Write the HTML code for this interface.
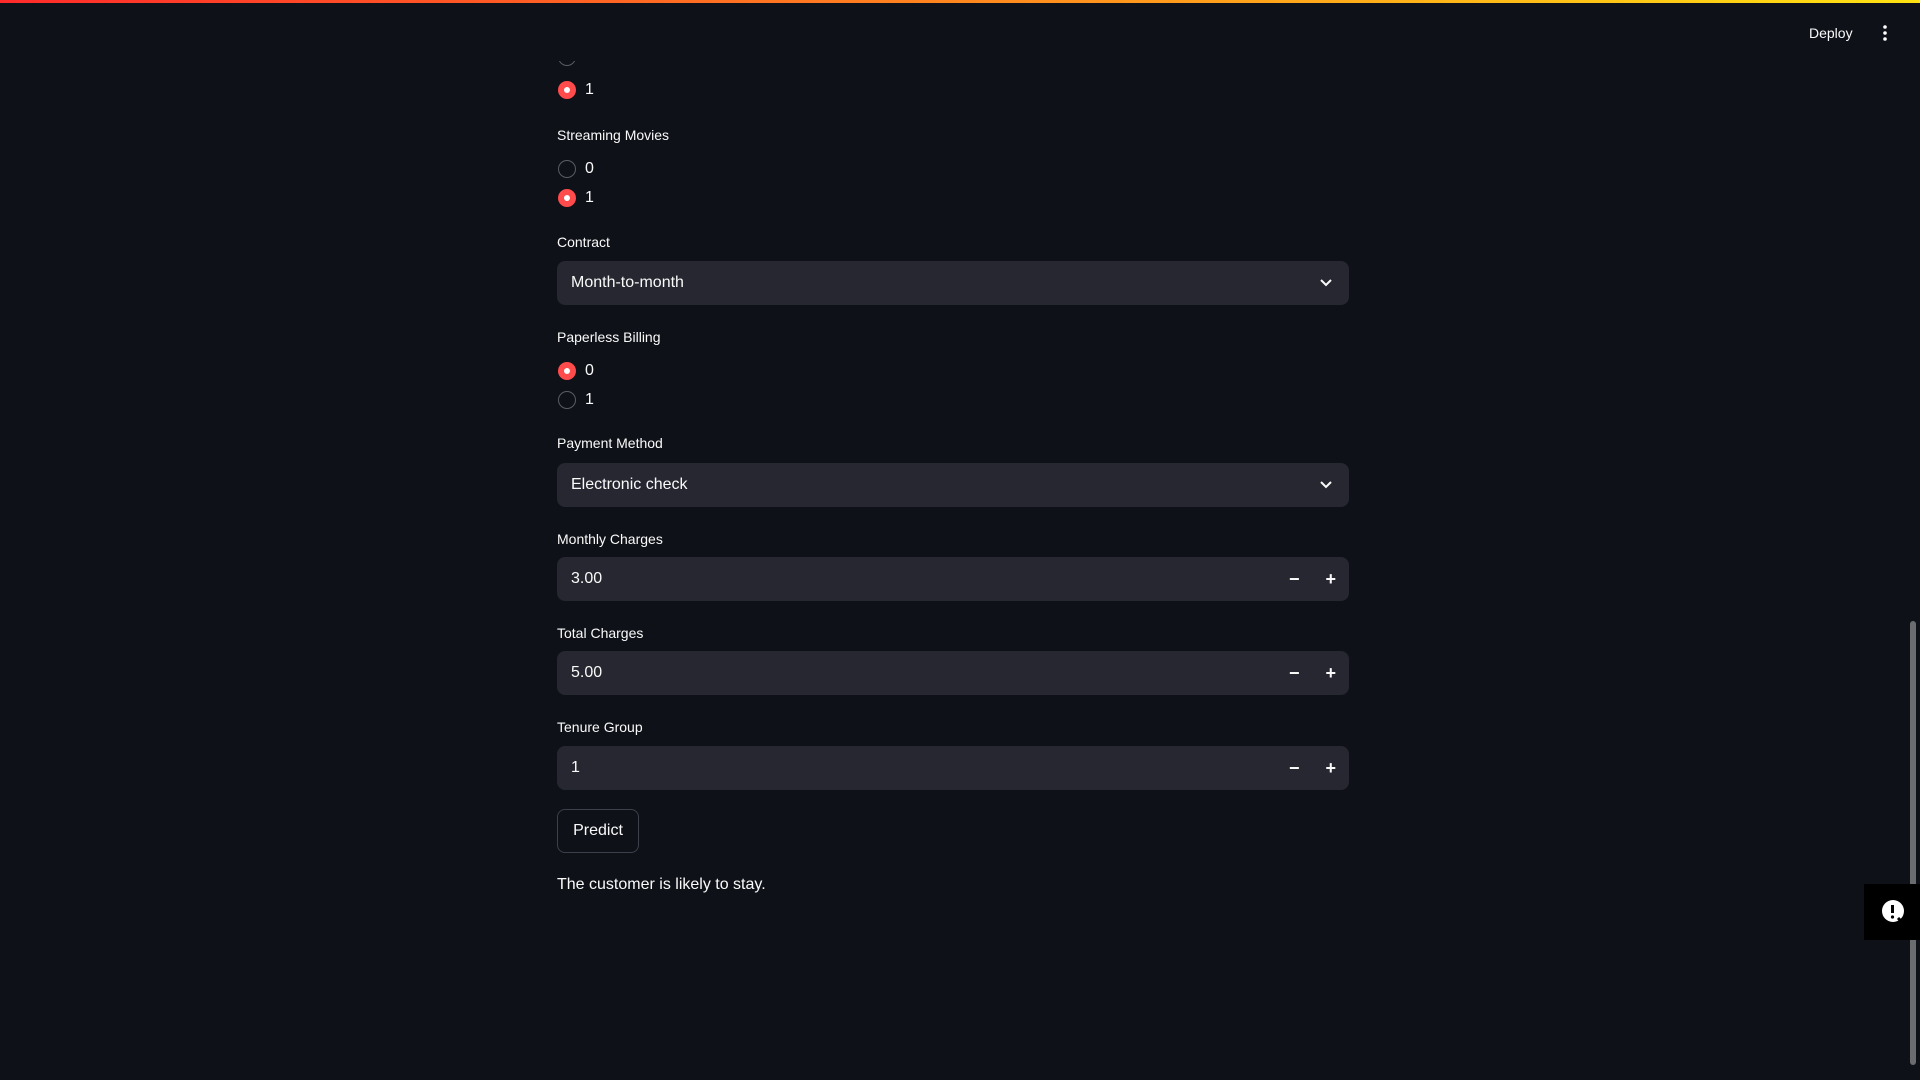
<!DOCTYPE html>
<html><head><meta charset="utf-8"><style>
*{box-sizing:border-box;margin:0;padding:0}
body{width:1920px;height:1080px;background:#0e1117;color:#fafafa;font-family:"Liberation Sans",sans-serif;position:relative;overflow:hidden}
.top{position:absolute;left:0;top:0;width:1920px;height:3px;background:linear-gradient(90deg,#ff2b2b,#ffe312)}
.a{position:absolute}
.lbl{font-size:14px;color:#fafafa}
.radio{position:absolute;left:558px;display:flex;align-items:center;font-size:16px}
.rc{width:18px;height:18px;border-radius:50%;border:1.5px solid #5b5d66;margin-right:9px}
.rc.on{background:#ff4b4b;border:none;position:relative}
.rc.on:after{content:"";position:absolute;left:6px;top:6px;width:6px;height:6px;border-radius:50%;background:#fff}
.box{position:absolute;left:557px;width:792px;height:44px;background:#262730;border-radius:8px;font-size:16px;padding-left:14px;display:flex;align-items:center}
.pm{position:absolute;right:13px;top:0;height:44px;display:flex;align-items:center;gap:26px;font-size:18px;font-weight:bold}
</style></head><body>
<div class="top"></div>
<div class="a" style="left:1809px;top:25px;font-size:14px">Deploy</div>
<svg class="a" style="left:1880px;top:24px" width="10" height="18"><circle cx="5" cy="3" r="1.8" fill="#fff"/><circle cx="5" cy="9" r="1.8" fill="#fff"/><circle cx="5" cy="15" r="1.8" fill="#fff"/></svg>

<div class="a" style="left:558px;top:61px;width:18px;height:5px;overflow:hidden"><div style="margin-top:-13px;width:18px;height:18px;border-radius:50%;border:1.5px solid #5b5d66"></div></div>
<div class="radio" style="top:81px"><div class="rc on"></div>1</div>
<div class="a lbl" style="left:557px;top:127px">Streaming Movies</div>
<div class="radio" style="top:160px"><div class="rc"></div>0</div>
<div class="radio" style="top:189px"><div class="rc on"></div>1</div>
<div class="a lbl" style="left:557px;top:234px">Contract</div>
<div class="box" style="top:261px">Month-to-month<svg class="a" style="right:16px;top:16px" width="14" height="12"><path d="M2 3l5 5 5-5" stroke="#fafafa" stroke-width="2" fill="none"/></svg></div>
<div class="a lbl" style="left:557px;top:329px">Paperless Billing</div>
<div class="radio" style="top:362px"><div class="rc on"></div>0</div>
<div class="radio" style="top:391px"><div class="rc"></div>1</div>
<div class="a lbl" style="left:557px;top:435px">Payment Method</div>
<div class="box" style="top:463px">Electronic check<svg class="a" style="right:16px;top:16px" width="14" height="12"><path d="M2 3l5 5 5-5" stroke="#fafafa" stroke-width="2" fill="none"/></svg></div>
<div class="a lbl" style="left:557px;top:531px">Monthly Charges</div>
<div class="box" style="top:557px">3.00<div class="pm"><span>−</span><span>+</span></div></div>
<div class="a lbl" style="left:557px;top:625px">Total Charges</div>
<div class="box" style="top:651px">5.00<div class="pm"><span>−</span><span>+</span></div></div>
<div class="a lbl" style="left:557px;top:719px">Tenure Group</div>
<div class="box" style="top:746px">1<div class="pm"><span>−</span><span>+</span></div></div>
<div class="a" style="left:557px;top:809px;width:82px;height:44px;border:1px solid #3d3f4a;border-radius:8px;font-size:16px;display:flex;align-items:center;justify-content:center">Predict</div>
<div class="a" style="left:557px;top:876px;font-size:16px">The customer is likely to stay.</div>

<div class="a" style="left:1910px;top:621px;width:6px;height:444px;background:#6b6c70;border-radius:3px"></div>
<div class="a" style="left:1864px;top:884px;width:56px;height:56px;background:#000"></div>
<svg class="a" style="left:1880px;top:898px" width="28" height="28"><circle cx="13" cy="13" r="11" fill="#fff"/><rect x="11" y="7" width="3" height="8" fill="#000"/><circle cx="12.5" cy="19" r="1.6" fill="#000"/><path d="M18 20l6 6" stroke="#000" stroke-width="3"/></svg>
</body></html>
